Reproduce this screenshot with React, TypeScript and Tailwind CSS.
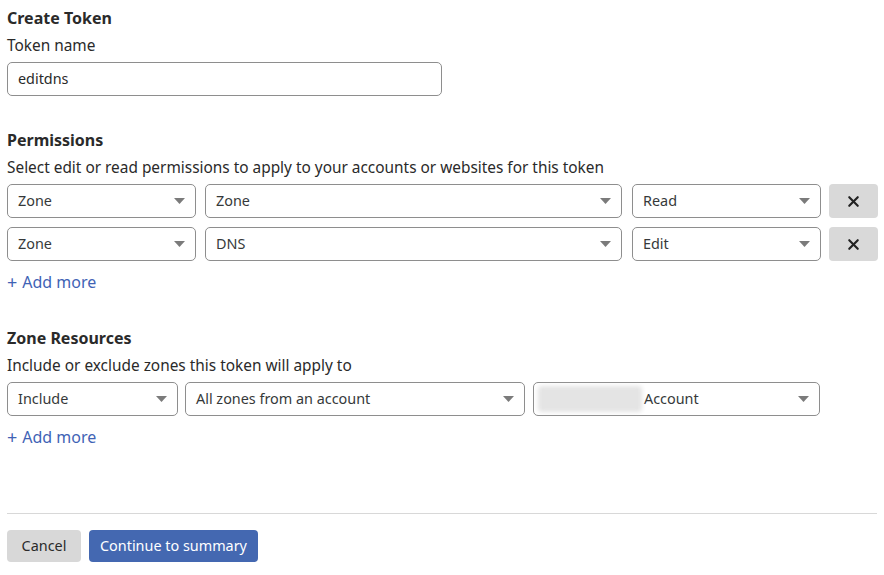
import { X } from 'lucide-react';

const font = { fontFamily: '"Noto Sans", "Open Sans", sans-serif' };

function Caret() {
  return (
    <svg width="11" height="6" viewBox="0 0 11 6" className="shrink-0">
      <path d="M0 0h11L5.5 6z" fill="#7b7b7b" />
    </svg>
  );
}

function SelectBox({ value, width, blurred }: { value: string; width: string; blurred?: boolean }) {
  return (
    <div
      className={`${width} h-[34px] shrink-0 flex items-center justify-between rounded-[5px] border border-[#8e8e8e] bg-white pl-[10px] pr-[10px] text-[14.4px] text-[#36393a]`}
    >
      <div className="flex items-center">
        {blurred && <div className="mr-[2px] -ml-[6px] h-[26px] w-[104px] rounded-sm bg-[#e4e4e4] blur-[2px]" />}
        <span>{value}</span>
      </div>
      <Caret />
    </div>
  );
}

function RemoveButton() {
  return (
    <button className="flex h-[34px] w-[49px] shrink-0 items-center justify-center rounded-[4px] bg-[#d9d9d9] text-[#222]">
      <X size={17} strokeWidth={3} />
    </button>
  );
}

function AddMore() {
  return (
    <button className="mt-[9px] flex items-center text-[16px] text-[#3f63b5]">
      <span className="mr-[5px] text-[18px] leading-none">+</span>Add more
    </button>
  );
}

export default function App() {
  return (
    <div className="min-h-[575px] w-[884px] bg-white px-[7px] text-[#1e2021]" style={font}>
      {/* Create Token */}
      <h2 className="pt-[7px] text-[16px] font-bold leading-[22px] text-[#2a2a2a]">Create Token</h2>
      <label className="mt-[6px] block text-[15.4px] leading-[22px] text-[#2a2a2a]">Token name</label>
      <div className="mt-[5px] flex h-[34px] w-[435px] items-center rounded-[5px] border border-[#8e8e8e] px-[10px] text-[14.4px] text-[#2a2a2a]">
        editdns
      </div>

      {/* Permissions */}
      <h3 className="mt-[33px] text-[16px] font-bold leading-[22px] text-[#2a2a2a]">Permissions</h3>
      <p className="mt-[6px] text-[15.4px] leading-[22px] text-[#2a2a2a]">
        Select edit or read permissions to apply to your accounts or websites for this token
      </p>
      <div className="mt-[5px] flex flex-col gap-[9px]">
        {[
          ['Zone', 'Zone', 'Read'],
          ['Zone', 'DNS', 'Edit'],
        ].map(([a, b, c], i) => (
          <div key={i} className="flex items-center">
            <SelectBox value={a} width="w-[189px]" />
            <div className="w-[9px] shrink-0" />
            <SelectBox value={b} width="w-[417px]" />
            <div className="w-[10px] shrink-0" />
            <SelectBox value={c} width="w-[189px]" />
            <div className="w-[8px] shrink-0" />
            <RemoveButton />
          </div>
        ))}
      </div>
      <AddMore />

      {/* Zone Resources */}
      <h3 className="mt-[33px] text-[16px] font-bold leading-[22px] text-[#2a2a2a]">Zone Resources</h3>
      <p className="mt-[6px] text-[15.4px] leading-[22px] text-[#2a2a2a]">Include or exclude zones this token will apply to</p>
      <div className="mt-[5px] flex items-center">
        <SelectBox value="Include" width="w-[171px]" />
        <div className="w-[7px] shrink-0" />
        <SelectBox value="All zones from an account" width="w-[340px]" />
        <div className="w-[8px] shrink-0" />
        <SelectBox value="Account" width="w-[287px]" blurred />
      </div>
      <AddMore />

      {/* Footer */}
      <div className="mt-[64px] border-t border-[#d8d8d8] pt-[16px]">
        <div className="flex gap-[8px]">
          <button className="h-[32px] w-[74px] rounded-[4px] bg-[#d8d8d8] text-[14.4px] text-[#2a2a2a]">Cancel</button>
          <button className="h-[32px] w-[169px] rounded-[4px] bg-[#4468b1] text-[14.4px] text-white">Continue to summary</button>
        </div>
      </div>
    </div>
  );
}
